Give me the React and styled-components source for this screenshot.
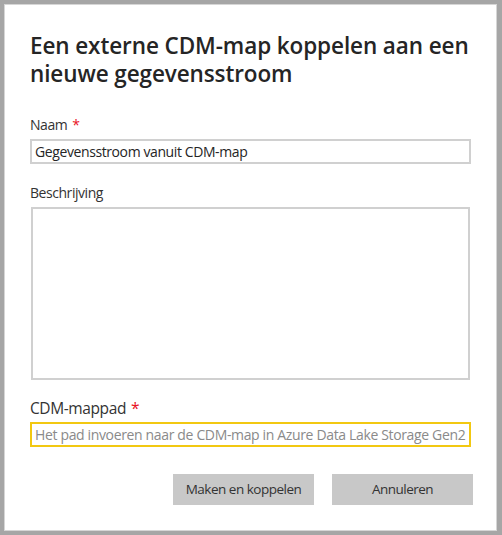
import React from "react";
import styled, { createGlobalStyle } from "styled-components";

const Global = createGlobalStyle`
  html, body { margin: 0; padding: 0; background: #a6a6a6; }
  * { box-sizing: border-box; }
`;

const Frame = styled.div`
  width: 502px;
  height: 535px;
  background: #a6a6a6;
  padding: 4px 5px 4px 4px;
`;

const Dialog = styled.div`
  height: 100%;
  background: #ffffff;
  box-shadow: inset 0 0 0 1px #d6d6d6;
  display: flex;
  flex-direction: column;
  padding: 28px 24px 0 26px;
  font-family: "Open Sans", "Noto Sans", sans-serif;
  color: #333333;
`;

const Title = styled.h1`
  margin: 0 0 26.6px 0;
  font-size: 22.5px;
  line-height: 28px;
  font-weight: 600;
  color: #252525;
  letter-spacing: -0.1px;
`;

const Field = styled.div`
  display: flex;
  flex-direction: column;
  margin-bottom: ${(p) => p.$mb || 0}px;
`;

const Label = styled.label`
  font-size: ${(p) => (p.$large ? 15.5 : 14)}px;
  line-height: ${(p) => (p.$large ? 22 : 20)}px;
  color: #333333;
  margin-bottom: ${(p) => (p.$large ? 2.8 : 4.4)}px;
  letter-spacing: ${(p) => (p.$large ? -0.4 : -0.45)}px;
`;

const Required = styled.span`
  color: #e81123;
  margin-left: 5px;
`;

const TextInput = styled.input`
  width: 441px;
  height: 25px;
  border: 2px solid ${(p) => (p.$focused ? "#f2c811" : "#d0d0d0")};
  padding: 0 2px 0 3px;
  font-family: "Open Sans", "Noto Sans", sans-serif;
  font-size: 14px;
  letter-spacing: ${(p) => (p.$focused ? -0.35 : -0.4)}px;
  color: #252525;
  background: #fff;
  outline: none;
  &::placeholder { color: #8a8a8a; }
`;

const TextArea = styled.textarea`
  width: 439px;
  height: 173px;
  border: 2px solid #d0d0d0;
  resize: none;
  outline: none;
  margin: 0 0 0 1px;
  display: block;
`;

const Buttons = styled.div`
  display: flex;
  justify-content: flex-end;
  gap: 18px;
  margin-top: 27px;
`;

const Button = styled.button`
  width: 141px;
  height: 31px;
  border: none;
  background: #c8c8c8;
  color: #333333;
  font-family: "Open Sans", "Noto Sans", sans-serif;
  font-size: 13.5px;
  letter-spacing: -0.5px;
  padding: 0;
`;

export default function App() {
  return (
    <>
      <Global />
      <Frame>
        <Dialog>
          <Title>
            Een externe CDM-map koppelen aan een nieuwe gegevensstroom
          </Title>
          <Field $mb={18.6}>
            <Label>
              Naam<Required>*</Required>
            </Label>
            <TextInput defaultValue="Gegevensstroom vanuit CDM-map" />
          </Field>
          <Field $mb={17.2}>
            <Label>Beschrijving</Label>
            <TextArea />
          </Field>
          <Field>
            <Label $large>
              CDM-mappad<Required>*</Required>
            </Label>
            <TextInput
              $focused
              placeholder="Het pad invoeren naar de CDM-map in Azure Data Lake Storage Gen2"
            />
          </Field>
          <Buttons>
            <Button>Maken en koppelen</Button>
            <Button>Annuleren</Button>
          </Buttons>
        </Dialog>
      </Frame>
    </>
  );
}
